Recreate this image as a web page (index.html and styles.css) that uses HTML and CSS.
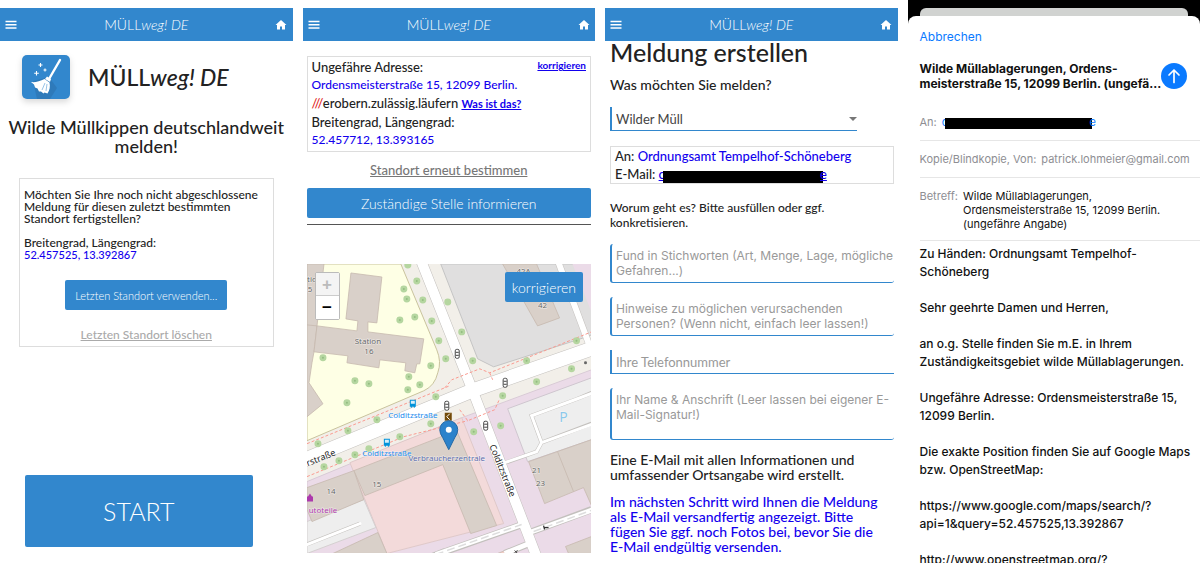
FILE: index.html
```html
<!DOCTYPE html>
<html lang="de">
<head>
    <meta charset="UTF-8">
    <meta name="viewport" content="width=device-width, initial-scale=1.0">
    <title>MÜLLweg! DE</title>
    <link rel="stylesheet" href="styles.css">
</head>
<body>
    <!-- shared icons -->
    <svg class="defs" width="0" height="0" aria-hidden="true">
        <symbol id="icon-menu" viewBox="0 0 12 10">
            <path d="M0.5 1.5h11M0.5 4.8h11M0.5 8h11" stroke="#fff" stroke-width="1.4"/>
        </symbol>
        <symbol id="icon-home" viewBox="0 0 24 24">
            <path d="M10 21v-6h4v6h6v-9h3L12 2 1 12h3v9z" fill="#fff"/>
        </symbol>
    </svg>

    <main class="screens">
        <!-- Start -->
        <section class="screen">
            <header class="navbar">
                <button type="button" class="icon-btn" aria-label="Menü"><svg class="menu-icon"><use href="#icon-menu"/></svg></button>
                <span>MÜLL<i>weg! DE</i></span>
                <a href="#" class="icon-btn" aria-label="Startseite"><svg class="home-icon"><use href="#icon-home"/></svg></a>
            </header>
            <div class="brand">
                <svg class="logo" viewBox="0 0 48 44" aria-hidden="true">
                    <rect width="48" height="44" rx="5" fill="#3287cd"/>
                    <path d="M11 26l16-4 8 11-7 11H15z" fill="#2a6ba4" opacity="0.45"/>
                    <path d="M38 5L27 24" stroke="#fff" stroke-width="2.4" stroke-linecap="round"/>
                    <path d="M25 21.500l4 2.500-1 3-5-3z" fill="#fff"/>
                    <path d="M22.500 24l5 3.500c1 4 0 8-2 11l-3-1-1 1-2.500-2-2 0-1.500-3-2.500-1-1-3-3-2.500c4 .5 9-.5 13.500-3z" fill="#fff"/>
                    <path d="M23 28l-3 7M25 29l-1 7" stroke="#3287cd" stroke-width="0.500"/>
                    <path d="M18.500 8v4M16.500 10h4M14.500 16v4.500M12.200 18.200h4.600M23 13.500v3M21.500 15h3" stroke="#fff" stroke-width="1.100"/>
                </svg>
                <h1>MÜLL<i>weg! DE</i></h1>
            </div>
            <h2 class="claim">Wilde Müllkippen deutschlandweit melden!</h2>
            <div class="resume">
                <p>Möchten Sie Ihre noch nicht abgeschlossene Meldung für diesen zuletzt bestimmten Standort fertigstellen?</p>
                <p>Breitengrad, Längengrad:<br><span class="value">52.457525, 13.392867</span></p>
                <button type="button" class="btn">Letzten Standort verwenden...</button>
                <a href="#" class="muted-link light">Letzten Standort löschen</a>
            </div>
            <button type="button" class="btn start-btn">START</button>
        </section>

        <!-- Standort -->
        <section class="screen">
            <header class="navbar">
                <button type="button" class="icon-btn" aria-label="Menü"><svg class="menu-icon"><use href="#icon-menu"/></svg></button>
                <span>MÜLL<i>weg! DE</i></span>
                <a href="#" class="icon-btn" aria-label="Startseite"><svg class="home-icon"><use href="#icon-home"/></svg></a>
            </header>
            <div class="location">
                <div class="address">
                    <a href="#" class="correct">korrigieren</a>
                    <div>Ungefähre Adresse:</div>
                    <div class="value">Ordensmeisterstraße 15, 12099 Berlin.</div>
                    <div><span class="slashes">///</span>erobern.zulässig.läufern <a href="#" class="what">Was ist das?</a></div>
                    <div>Breitengrad, Längengrad:</div>
                    <div class="value">52.457712, 13.393165</div>
                </div>
                <a href="#" class="muted-link">Standort erneut bestimmen</a>
                <button type="button" class="btn inform-btn">Zuständige Stelle informieren</button>
                <hr>
                <div class="map">
                    <svg viewBox="307 264 285 290" role="img" aria-label="Karte Colditzstraße">
                        <rect x="307" y="264" width="285" height="290" fill="#f2efe9"/>
                        <!-- areas -->
                        <path d="M307 264H401L437 350Q442 362 438 373Q435 386 424 391L307 441Z" fill="#feffe5" stroke="#c9c39d"/>
                        <path d="M441 264L478 359L494 367L587 337L592 335V264Z" fill="#e0dfdf" stroke="#c4c4c4"/>
                        <path d="M573 264H592V312Z" fill="#ebdbe8"/>
                        <path d="M307 482L462 418L592 370V554H307Z" fill="#ebdbe8" stroke="#d9cbd6"/>
                        <path d="M350 463L462 418L504 524L387 554Z" fill="#f3dada" stroke="#dfc9c9"/>
                        <path d="M508 409L592 378V440L528 462Z" fill="#eee" stroke="#cfc6cf"/>
                        <path d="M307 522L364 500L376 528L307 554Z" fill="#eee" stroke="#d4d0d0"/>
                        <!-- buildings -->
                        <g fill="#d9d0c9" stroke="#c6b9ae" stroke-width="0.800">
                            <path d="M307 264H324L317 326L314 352L312 363L309 383L323 404L307 417Z"/>
                            <path d="M307 325L317 326"/>
                            <path d="M351 273L382 277L377 323L368 322V332L424 339L420 364H417L415 373L405 371L406 363L380 360L379 368L347 363L348 356L314 352L317 326L357 331L358 321L346 319Z"/>
                            <path d="M503 264H537L560 318L538 326Z"/>
                            <path d="M354 471L457 431L497 526L471 534L443 465L365 496Z"/>
                            <path d="M307 488L354 471L364 500L312 522L307 510Z"/>
                            <path d="M333 554L378 533L387 554Z"/>
                            <path d="M529 462L592 440V506L584 488L545 504Z"/>
                            <path d="M558 452L574 492"/>
                            <path d="M566 547L592 537V554H569Z"/>
                            <path d="M498 554L513 548L517 554Z" fill="#f3cfc8"/>
                        </g>
                        <!-- streets -->
                        <g fill="none" stroke="#c3c0bd">
                            <path d="M307 545L360 524" stroke-width="4"/>
                            <path d="M506 463L537 452L542 443L532 416L578 399L592 393M542 443L592 424" stroke-width="4"/>
                            <path d="M445 552L430 558M440 554L520 526M530 533L592 510M505 554L530 544" stroke-width="7"/>
                            <path d="M558 260L589 343" stroke-width="7"/>
                            <path d="M421 260L473 391L538 560" stroke-width="11"/>
                            <path d="M300 462L472 391L600 346" stroke-width="15"/>
                        </g>
                        <g fill="none" stroke="#fff">
                            <path d="M305 546L360 524" stroke-width="3" stroke-linecap="round"/>
                            <path d="M505 463L537 452L542 443L532 416L578 399L594 393M542 443L594 424" stroke-width="3"/>
                            <path d="M436 555L522 525M530 533L594 510M505 554L532 543" stroke-width="5"/>
                            <path d="M558 260L589 343" stroke-width="6"/>
                            <path d="M421 260L473 391L538 560" stroke-width="10"/>
                            <path d="M300 462L472 391L600 346" stroke-width="14"/>
                            <path d="M436 555L522 525M534 532L594 510" stroke="#ddd" stroke-width="1.500" stroke-dasharray="8 4"/>
                        </g>
                        <!-- footways -->
                        <path d="M307 444L450 386M307 477L404 437L468 421M445 388L452 380L480 369L490 373L592 332M490 373L493 380M460 410L468 421L495 410L500 399" fill="none" stroke="#fa9a90" stroke-dasharray="3 2"/>
                        <!-- trees -->
                        <path class="trees" d="M417 281h0M404 289h0M407 299h0M423 300h0M400 320h0M415 317h0M432 321h0M439 341h0M446 359h0M431 366h0M409 377h0M420 385h0M408 390h0M355 381h0M369 384h0M323 358h0M347 403h0M436 397h0M408 265h0M448 302h0M462 332h0M473 361h0M527 361h0M577 341h0M572 369h0M537 382h0M503 396h0M377 420h0M348 431h0M318 444h0M431 424h0M400 437h0M369 449h0M355 455h0M339 461h0M324 467h0M474 432h0M501 426h0"/>
                        <path class="trunks" d="M417 281h0M404 289h0M407 299h0M423 300h0M400 320h0M415 317h0M432 321h0M439 341h0M446 359h0M431 366h0M409 377h0M420 385h0M408 390h0M355 381h0M369 384h0M323 358h0M347 403h0M436 397h0M462 332h0M473 361h0M527 361h0M577 341h0M572 369h0M537 382h0M503 396h0M377 420h0M348 431h0M318 444h0M431 424h0M400 437h0M355 455h0M339 461h0M324 467h0M474 432h0M501 426h0"/>
                        <!-- traffic lights -->
                        <g fill="#fff" stroke="#444">
                            <rect x="455.500" y="349.500" width="4" height="9" rx="1.500"/>
                            <rect x="503.500" y="378.500" width="4" height="9" rx="1.500"/>
                            <rect x="445" y="401.500" width="4" height="9" rx="1.500"/>
                            <rect x="484" y="421.500" width="4" height="9" rx="1.500"/>
                            <path d="M456 352.500h3M456 355.500h3M504 381.500h3M504 384.500h3M445.500 404.500h3M445.500 407.500h3M484.500 424.500h3M484.500 427.500h3"/>
                        </g>
                        <circle cx="586" cy="363" r="1.500" fill="#666"/>
                        <path d="M544 526l1 4M545 528h4" stroke="#333" stroke-width="1.300"/>
                        <path d="M515 551l3 3M518 551l-3 2" stroke="#444"/>
                        <!-- bus stops, shop, museum -->
                        <path d="M410 400h6v7h-1v1h-1v-1h-2v1h-1v-1h-1zM384 439h6v7h-1v1h-1v-1h-2v1h-1v-1h-1z" fill="#0092da"/>
                        <path d="M411 401h4v3h-4zM385 440h4v3h-4z" fill="#d5effb"/>
                        <path d="M307 497h1l2-3 2 3h1v5h-6z" fill="#ac39ac"/>
                        <path d="M445 413h7v8h-7z" fill="#734a08"/>
                        <path d="M450 414l-3 3 3 3" fill="none" stroke="#fff"/>
                        <!-- labels -->
                        <g class="labels">
                            <text x="368" y="344">Station</text>
                            <text x="369" y="354">16</text>
                            <text x="312" y="282">tio</text>
                            <text x="310" y="292">5</text>
                            <text x="524" y="274">42A</text>
                            <text x="543" y="308">42</text>
                            <text x="377" y="487">15</text>
                            <text x="331" y="494">14</text>
                            <text x="537" y="473">21</text>
                            <text x="541" y="486">23</text>
                            <text x="413" y="418" class="stop">Colditzstraße</text>
                            <text x="387" y="456" class="stop">Colditzstraße</text>
                            <text x="447" y="461" class="office">Verbraucherzentrale</text>
                            <text x="323" y="513" class="shop">utoteile</text>
                            <text x="564" y="422" class="parking">P</text>
                            <text class="street" transform="translate(322 461) rotate(-22)">rstraße</text>
                            <text class="street" transform="translate(500 472) rotate(68)">Colditzstraße</text>
                        </g>
                        <!-- marker -->
                        <path d="M449 450L443 438Q440 434 440 430A9 9 0 0 1 458 430Q458 434 455 438Z" fill="#2b82cb" stroke="#2468a5"/>
                        <circle cx="449" cy="430" r="3" fill="#fff"/>
                    </svg>
                    <div class="zoom">
                        <button type="button" disabled aria-label="Vergrößern">+</button>
                        <button type="button" aria-label="Verkleinern">−</button>
                    </div>
                    <button type="button" class="btn map-btn">korrigieren</button>
                </div>
            </div>
        </section>

        <!-- Meldung -->
        <section class="screen">
            <header class="navbar">
                <button type="button" class="icon-btn" aria-label="Menü"><svg class="menu-icon"><use href="#icon-menu"/></svg></button>
                <span>MÜLL<i>weg! DE</i></span>
                <a href="#" class="icon-btn" aria-label="Startseite"><svg class="home-icon"><use href="#icon-home"/></svg></a>
            </header>
            <form class="report">
                <h1>Meldung erstellen</h1>
                <label for="kind">Was möchten Sie melden?</label>
                <div class="select-wrap">
                    <select id="kind" name="kind">
                        <option>Wilder Müll</option>
                    </select>
                </div>
                <div class="recipient">
                    <div>An: <span class="value">Ordnungsamt Tempelhof-Schöneberg</span></div>
                    <div>E-Mail: <a href="#" class="value">o<span class="redacted"></span>e</a></div>
                </div>
                <p class="hint">Worum geht es? Bitte ausfüllen oder ggf. konkretisieren.</p>
                <textarea class="field" rows="2" aria-label="Fund" placeholder="Fund in Stichworten (Art, Menge, Lage, mögliche Gefahren...)"></textarea>
                <textarea class="field" rows="2" aria-label="Hinweise" placeholder="Hinweise zu möglichen verursachenden Personen? (Wenn nicht, einfach leer lassen!)"></textarea>
                <input class="field" type="tel" aria-label="Telefonnummer" placeholder="Ihre Telefonnummer">
                <textarea class="field tall" rows="3" aria-label="Name und Anschrift" placeholder="Ihr Name &amp; Anschrift (Leer lassen bei eigener E-Mail-Signatur!)"></textarea>
                <p>Eine E-Mail mit allen Informationen und umfassender Ortsangabe wird erstellt.</p>
                <p class="value">Im nächsten Schritt wird Ihnen die Meldung als E-Mail versandfertig angezeigt. Bitte fügen Sie ggf. noch Fotos bei, bevor Sie die E-Mail endgültig versenden.</p>
            </form>
        </section>

        <!-- E-Mail -->
        <section class="mail">
            <div class="back-card"></div>
            <div class="sheet">
                <button type="button" class="cancel">Abbrechen</button>
                <div class="mail-head">
                    <h2>Wilde Müllablagerungen, Ordens-<br>meisterstraße 15, 12099 Berlin. (ungefä...</h2>
                    <button type="button" class="send" aria-label="Senden">
                        <svg viewBox="0 0 26 26"><path d="M13 19.500V7M8 12l5-5 5 5" fill="none" stroke="#fff" stroke-width="1.700" stroke-linecap="round" stroke-linejoin="round"/></svg>
                    </button>
                </div>
                <div class="row to"><span>An:</span> <a href="#">o<span class="redacted"></span>e</a></div>
                <div class="row"><span>Kopie/Blindkopie, Von:</span> <span>patrick.lohmeier@gmail.com</span></div>
                <div class="row subject"><span>Betreff:</span> <strong>Wilde Müllablagerungen, Ordensmeisterstraße 15, 12099 Berlin. (ungefähre Angabe)</strong></div>
                <div class="message">
                    <p>Zu Händen: Ordnungsamt Tempelhof-Schöneberg</p>
                    <p>Sehr geehrte Damen und Herren,</p>
                    <p>an o.g. Stelle finden Sie m.E. in Ihrem Zuständigkeitsgebiet wilde Müllablagerungen.</p>
                    <p>Ungefähre Adresse: Ordensmeisterstraße 15, 12099 Berlin.</p>
                    <p>Die exakte Position finden Sie auf Google Maps bzw. OpenStreetMap:</p>
                    <p>https://www.google.com/maps/search/?<wbr>api=1&amp;query=52.457525,13.392867</p>
                    <p>http://www.openstreetmap.org/?</p>
                </div>
            </div>
        </section>
    </main>
</body>
</html>
```
FILE: styles.css
```css
* {
    box-sizing: border-box;
}
body {
    margin: 0;
    background: #fff;
    color: #222;
    font-family: Lato, sans-serif;
    font-size: 14px;
    font-weight: 500;
}
h1, h2, p {
    margin: 0;
    font-weight: 500;
}
button, input, select, textarea {
    font-family: inherit;
    font-size: inherit;
    margin: 0;
}
.defs {
    position: absolute;
}
.screens {
    display: grid;
    grid-template-columns: repeat(4, minmax(0, 1fr));
    grid-template-rows: 100vh;
    gap: 10px;
    height: 100vh;
    overflow: hidden;
}
.screen {
    display: flex;
    flex-direction: column;
    padding-top: 8px;
}
.value {
    color: #1200ee;
}

/* top bar */
.navbar {
    display: flex;
    flex: none;
    justify-content: space-between;
    align-items: center;
    height: 33px;
    padding: 0 5px;
    background: #3287cd;
    color: #fff;
    font-size: 14px;
    font-weight: 300;
}
.icon-btn {
    display: flex;
    padding: 0;
    border: none;
    background: none;
}
.menu-icon {
    width: 12px;
    height: 10px;
}
.home-icon {
    width: 12px;
    height: 12px;
}
.btn {
    border: none;
    border-radius: 2px;
    background: #3287cd;
    color: #fff;
    font-weight: 300;
    cursor: pointer;
}

/* start screen */
.brand {
    display: flex;
    align-items: center;
    gap: 18px;
    padding: 14px 22px 0;
}
.logo {
    width: 48px;
    height: 44px;
    filter: drop-shadow(0 3px 3px rgba(0, 0, 0, 0.15));
}
.brand h1 {
    font-size: 23px;
    line-height: 40px;
}
.claim {
    margin: 19px 8px 22px;
    font-size: 18px;
    line-height: 19px;
    text-align: center;
}
.resume {
    display: flex;
    flex-direction: column;
    margin: 0 19px;
    padding: 10px 4px 4px;
    border: 1px solid #ddd;
    font-size: 12px;
    line-height: 12px;
}
.resume p {
    margin-bottom: 12px;
}
.resume .value {
    font-size: 11px;
}
.resume .btn {
    align-self: center;
    height: 30px;
    margin: 7px 0 18px;
    padding: 0 10px;
    font-size: 11px;
}
.muted-link {
    align-self: center;
    color: #777;
    font-size: 13px;
    line-height: 14px;
}
.muted-link.light {
    color: #aaa;
    font-size: 12px;
}
.start-btn {
    height: 72px;
    margin: auto 40px 16px 25px;
    font-size: 25px;
}

/* location screen */
.location {
    display: flex;
    flex-direction: column;
    padding: 15px 4px 0;
}
.address {
    padding: 1px 4px 2px;
    border: 1px solid #ddd;
    font-size: 13px;
    line-height: 18px;
}
.address .value {
    font-size: 12px;
}
.correct {
    float: right;
    color: #1200ee;
    font-size: 10px;
    font-weight: 700;
    line-height: 14px;
}
.what {
    color: #1200ee;
    font-size: 11px;
    font-weight: 700;
}
.slashes {
    color: #e11f26;
}
.location .muted-link {
    margin: 11px 0;
}
.inform-btn {
    height: 30px;
    margin-bottom: 6px;
}
hr {
    width: 100%;
    margin: 0 0 39px;
    border: none;
    border-top: 1px solid #555;
}
.map {
    position: relative;
}
.map > svg {
    display: block;
    width: 100%;
    height: auto;
}
.trees, .trunks {
    fill: none;
    stroke: #b5d6a0;
    stroke-width: 7px;
    stroke-linecap: round;
}
.trunks {
    stroke: #93bd80;
    stroke-width: 2px;
}
.labels text {
    fill: #666;
    stroke: rgba(255, 255, 255, 0.6);
    stroke-width: 1px;
    paint-order: stroke;
    font-family: "Noto Sans", sans-serif;
    font-size: 8px;
    font-weight: 400;
    text-anchor: middle;
}
.labels .stop {
    fill: #1a8aed;
}
.labels .office {
    fill: #5a6bab;
}
.labels .shop {
    fill: #ac39ac;
}
.labels .street {
    fill: #222;
    font-size: 9px;
}
.labels .parking {
    fill: #8cc8ea;
    font-size: 14px;
}
.zoom {
    position: absolute;
    top: 8px;
    left: 8px;
    display: flex;
    flex-direction: column;
    border: 1px solid #bbb;
    border-radius: 2px;
}
.zoom button {
    width: 23px;
    height: 23px;
    padding: 0;
    border: none;
    background: #fff;
    color: #000;
    font: bold 17px/23px "Liberation Sans", sans-serif;
}
.zoom button:disabled {
    border-bottom: 1px solid #ccc;
    background: #f4f4f4;
    color: #bbb;
}
.map-btn {
    position: absolute;
    top: 8px;
    right: 8px;
    height: 30px;
    padding: 0 7px;
}

/* report form */
.report {
    display: flex;
    flex-direction: column;
    padding: 0 4px 0 5px;
    line-height: 15px;
}
.report h1 {
    margin-bottom: 14px;
    font-size: 25px;
    line-height: 22px;
}
.select-wrap {
    position: relative;
    width: 247px;
    max-width: 100%;
    margin: 15px 0;
}
.select-wrap::after {
    content: "";
    position: absolute;
    top: 10px;
    right: 0;
    border: 4px solid transparent;
    border-top-color: #777;
}
select {
    display: block;
    width: 100%;
    height: 24px;
    padding: 0 4px;
    border: solid #3287cd;
    border-width: 0 0 1px 2px;
    border-radius: 0;
    background: none;
    color: #444;
    font-size: 13px;
    appearance: none;
}
.recipient {
    padding: 0 4px;
    border: 1px solid #ddd;
    font-size: 13px;
    line-height: 18px;
}
.redacted {
    display: inline-block;
    width: 160px;
    height: 12px;
    margin: 0 -3px;
    background: #000;
    vertical-align: -4px;
}
.field {
    display: block;
    width: 100%;
    height: 39px;
    margin-bottom: 14px;
    padding: 4px 0 0 4px;
    border: solid #3287cd;
    border-width: 0 0 1px 2px;
    border-radius: 3px;
    background: none;
    font-family: Inter, sans-serif;
    font-size: 12px;
    line-height: 15px;
    resize: none;
    overflow: hidden;
}
.field::placeholder {
    color: #999;
}
input.field {
    height: 24px;
    padding: 0 4px;
    border-radius: 0;
    font-family: Lato, sans-serif;
    font-size: 13px;
}
.field.tall {
    height: 52px;
    margin-bottom: 12px;
}
.report p {
    margin-bottom: 12px;
    padding-right: 12px;
}
.report .hint {
    margin: 16px 0 14px;
    padding-right: 40px;
    font-size: 12px;
}

/* mail app */
.mail {
    display: flex;
    flex-direction: column;
    padding-top: 8px;
    background: linear-gradient(#000 24px, #fff 24px);
    font-family: Inter, sans-serif;
    font-size: 12px;
    font-weight: 400;
}
.back-card {
    flex: none;
    height: 8px;
    margin: 0 12px;
    border-radius: 6px 6px 0 0;
    background: #d1d3d1;
}
.sheet {
    padding: 12px 0 0 12px;
    border-radius: 8px 8px 0 0;
    background: #fff;
    color: #111;
}
.cancel {
    padding: 0;
    border: none;
    background: none;
    color: #0a7aff;
    line-height: 18px;
}
.mail-head {
    display: flex;
    justify-content: space-between;
    align-items: center;
    margin: 15px 14px 13px 0;
}
.mail-head h2 {
    font-size: 12px;
    font-weight: 700;
    line-height: 15px;
    white-space: nowrap;
}
.send {
    flex: none;
    width: 26px;
    height: 26px;
    padding: 0;
    border: none;
    border-radius: 50%;
    background: #0a7aff;
}
.send svg {
    display: block;
}
.row {
    display: flex;
    gap: 5px;
    padding: 11px 0;
    border-bottom: 1px solid #e6e6e6;
    color: #8e8e93;
    font-size: 11px;
    line-height: 14px;
}
.row.to a {
    color: #0a7aff;
    text-decoration: none;
}
.row .redacted {
    width: 147px;
    height: 11px;
    vertical-align: -3px;
}
.row.subject {
    padding-bottom: 9px;
}
.row strong {
    padding-right: 28px;
    color: #111;
    font-weight: 400;
}
.message {
    padding: 4px 8px 0 0;
    line-height: 18px;
}
.message p {
    margin-bottom: 18px;
}
```
